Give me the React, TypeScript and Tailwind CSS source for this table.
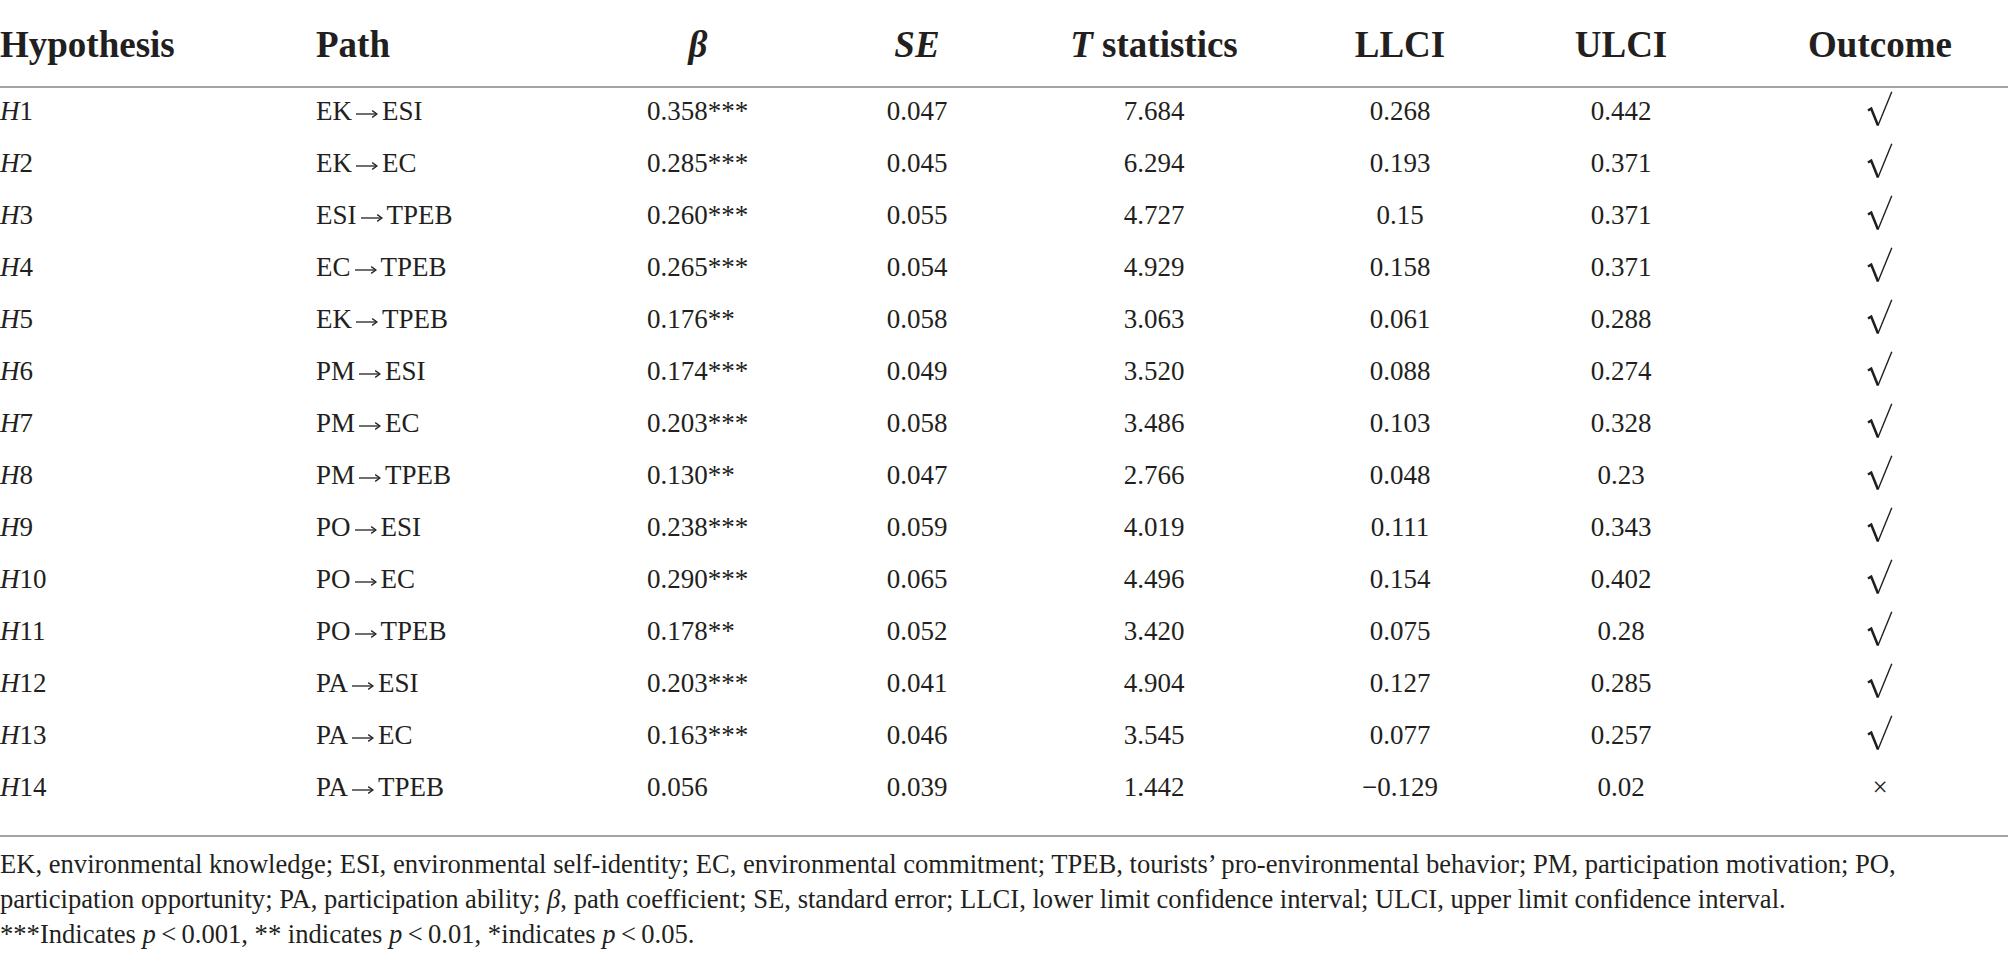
import React from "react";

type Row = {
  h: string;
  path: [string, string];
  beta: string;
  se: string;
  t: string;
  llci: string;
  ulci: string;
  ok: boolean;
};

const rows: Row[] = [
  { h: "1", path: ["EK", "ESI"], beta: "0.358***", se: "0.047", t: "7.684", llci: "0.268", ulci: "0.442", ok: true },
  { h: "2", path: ["EK", "EC"], beta: "0.285***", se: "0.045", t: "6.294", llci: "0.193", ulci: "0.371", ok: true },
  { h: "3", path: ["ESI", "TPEB"], beta: "0.260***", se: "0.055", t: "4.727", llci: "0.15", ulci: "0.371", ok: true },
  { h: "4", path: ["EC", "TPEB"], beta: "0.265***", se: "0.054", t: "4.929", llci: "0.158", ulci: "0.371", ok: true },
  { h: "5", path: ["EK", "TPEB"], beta: "0.176**", se: "0.058", t: "3.063", llci: "0.061", ulci: "0.288", ok: true },
  { h: "6", path: ["PM", "ESI"], beta: "0.174***", se: "0.049", t: "3.520", llci: "0.088", ulci: "0.274", ok: true },
  { h: "7", path: ["PM", "EC"], beta: "0.203***", se: "0.058", t: "3.486", llci: "0.103", ulci: "0.328", ok: true },
  { h: "8", path: ["PM", "TPEB"], beta: "0.130**", se: "0.047", t: "2.766", llci: "0.048", ulci: "0.23", ok: true },
  { h: "9", path: ["PO", "ESI"], beta: "0.238***", se: "0.059", t: "4.019", llci: "0.111", ulci: "0.343", ok: true },
  { h: "10", path: ["PO", "EC"], beta: "0.290***", se: "0.065", t: "4.496", llci: "0.154", ulci: "0.402", ok: true },
  { h: "11", path: ["PO", "TPEB"], beta: "0.178**", se: "0.052", t: "3.420", llci: "0.075", ulci: "0.28", ok: true },
  { h: "12", path: ["PA", "ESI"], beta: "0.203***", se: "0.041", t: "4.904", llci: "0.127", ulci: "0.285", ok: true },
  { h: "13", path: ["PA", "EC"], beta: "0.163***", se: "0.046", t: "3.545", llci: "0.077", ulci: "0.257", ok: true },
  { h: "14", path: ["PA", "TPEB"], beta: "0.056", se: "0.039", t: "1.442", llci: "\u22120.129", ulci: "0.02", ok: false },
];

const grid =
  "grid grid-cols-[316px_272px_220px_218px_256px_236px_206px_284px]";

function Check() {
  return (
    <svg width="26" height="36" viewBox="0 0 26 36" className="inline-block mt-[-4px]">
      <path d="M1 19.5 L4.2 17.6 L11 34.5" fill="none" stroke="#231f20" strokeWidth="2.6" strokeLinejoin="miter" />
      <path d="M11 34.5 L24.8 0.8" fill="none" stroke="#231f20" strokeWidth="1.4" />
    </svg>
  );
}

function Arrow() {
  return (
    <svg width="22" height="10" viewBox="0 0 22 10" className="mx-[4px] mt-[5px] shrink-0">
      <path d="M0 5 H20.5" stroke="#231f20" strokeWidth="1.3" fill="none" />
      <path d="M16.2 1.6 L21 5 L16.2 8.4" stroke="#231f20" strokeWidth="1.3" fill="none" strokeLinejoin="miter" />
    </svg>
  );
}

export default function App() {
  return (
    <div
      className="w-[2008px] h-[969px] bg-white text-[#231f20] overflow-hidden"
      style={{ fontFamily: '"Liberation Serif", "Times New Roman", serif' }}
    >
      {/* Header */}
      <div className={`${grid} h-[86px] items-center pt-[2px] text-[37px] font-bold leading-none`}>
        <div>Hypothesis</div>
        <div>Path</div>
        <div className="text-center italic">β</div>
        <div className="text-center italic">SE</div>
        <div className="text-center">
          <span className="italic">T</span> statistics
        </div>
        <div className="text-center">LLCI</div>
        <div className="text-center">ULCI</div>
        <div className="text-center pl-[28px]">Outcome</div>
      </div>
      <div className="h-[2px] bg-[#a3a3a3]" />

      {/* Body */}
      <div className="text-[27px]">
        {rows.map((r) => (
          <div key={r.h} className={`${grid} h-[52px] items-center pb-[6px]`}>
            <div>
              <span className="italic">H</span>
              {r.h}
            </div>
            <div className="flex items-center">
              <span>{r.path[0]}</span>
              <Arrow />
              <span>{r.path[1]}</span>
            </div>
            <div className="pl-[59px]">{r.beta}</div>
            <div className="text-center">{r.se}</div>
            <div className="text-center">{r.t}</div>
            <div className="text-center">{r.llci}</div>
            <div className="text-center">{r.ulci}</div>
            <div className="flex justify-center pl-[28px]">
              {r.ok ? <Check /> : <span>×</span>}
            </div>
          </div>
        ))}
      </div>

      <div className="mt-[19px] h-[2px] bg-[#a3a3a3]" />

      {/* Footnote */}
      <div className="pt-[10px] text-[26.6px] leading-[35px]">
        <div className="whitespace-nowrap">
          EK, environmental knowledge; ESI, environmental self-identity; EC, environmental commitment; TPEB, tourists’
          pro-environmental behavior; PM, participation motivation; PO,
        </div>
        <div className="whitespace-nowrap">
          participation opportunity; PA, participation ability; <span className="italic">β</span>, path coefficient;
          SE, standard error; LLCI, lower limit confidence interval; ULCI, upper limit confidence interval.
        </div>
        <div className="whitespace-nowrap">
          ***Indicates <span className="italic">p</span>{"\u2009<\u2009"}0.001, ** indicates{" "}
          <span className="italic">p</span>{"\u2009<\u2009"}0.01, *indicates <span className="italic">p</span>
          {"\u2009<\u2009"}0.05.
        </div>
      </div>
    </div>
  );
}
